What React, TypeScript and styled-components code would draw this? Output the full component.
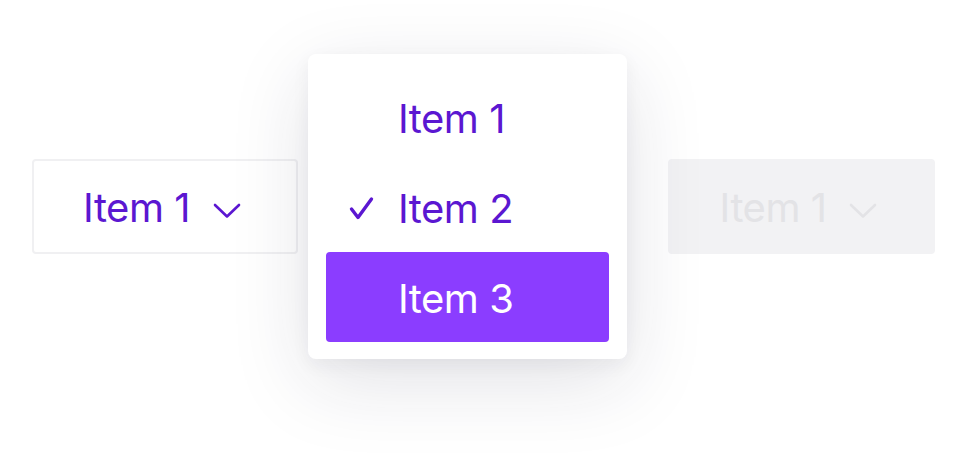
import React from "react";
import styled, {createGlobalStyle} from "styled-components";

const GlobalStyle = createGlobalStyle`
  html, body {
    margin: 0;
    padding: 0;
    background: #FFFFFF;
  }
  body {
    font-family: Inter, "Noto Sans", sans-serif;
  }
`

const items = ['Item 1', 'Item 2', 'Item 3'];

const Chevron: React.FC<{color: string}> = ({color}) => (
    <svg width="32" height="32" viewBox="0 0 32 32" fill="none">
        <path d="M4 13 L16 24.5 L28 13" stroke={color} strokeWidth="2.6" strokeLinecap="round" strokeLinejoin="round"/>
    </svg>
);

const Check: React.FC = () => (
    <svg width="32" height="32" viewBox="0 0 32 32" fill="none">
        <path d="M5.5 16 L12 24.5 L25.5 6" stroke="#5B17D1" strokeWidth="3.4" strokeLinecap="round" strokeLinejoin="round"/>
    </svg>
);

export default function App() {
    return (
        <>
            <GlobalStyle/>
            <PageStyle>
                <SelectButton>
                    <LabelStyle>Item 1</LabelStyle>
                    <Chevron color={"#5B17D1"}/>
                </SelectButton>

                <MenuStyle>
                    {items.map((item) => (
                        <MenuItemStyle key={item} active={item === 'Item 3'}>
                            <IconSlot>{item === 'Item 2' ? <Check/> : null}</IconSlot>
                            <LabelStyle>{item}</LabelStyle>
                        </MenuItemStyle>
                    ))}
                </MenuStyle>

                <SelectButton disabled>
                    <LabelStyle>Item 1</LabelStyle>
                    <Chevron color={"#E3E3E6"}/>
                </SelectButton>
            </PageStyle>
        </>
    );
}

const PageStyle = styled.div`
  display: flex;
  align-items: center;
  width: 972px;
  height: 456px;
  box-sizing: border-box;
  padding: 54px 0 97px 32px;
`

const SelectButton = styled.div<{disabled?: boolean}>`
  display: flex;
  align-items: center;
  justify-content: center;
  gap: 21px;
  box-sizing: border-box;
  width: ${p => p.disabled ? 267 : 266}px;
  height: 95px;
  margin-top: -1px;
  margin-left: ${p => p.disabled ? 41 : 0}px;
  padding: 3px 4px 0 0;
  border-radius: 4px;
  border: 2px solid ${p => p.disabled ? '#F2F2F4' : '#F0F0F2'};
  background: ${p => p.disabled ? '#F2F2F4' : '#FFFFFF'};
  color: ${p => p.disabled ? '#E3E3E6' : '#5B17D1'};
`

const LabelStyle = styled.span`
  font-size: 40px;
  font-weight: 400;
  line-height: 1;
  letter-spacing: -0.5px;
`

const MenuStyle = styled.div`
  position: relative;
  z-index: 1;
  display: flex;
  flex-direction: column;
  box-sizing: border-box;
  width: 319px;
  height: 305px;
  margin-left: 10px;
  padding: 18px 18px 17px;
  border-radius: 8px;
  background: #FFFFFF;
  box-shadow: 0 22px 80px rgba(30, 30, 60, 0.13), 0 6px 18px rgba(30, 30, 60, 0.05);
`

const MenuItemStyle = styled.div<{active?: boolean}>`
  display: flex;
  align-items: center;
  gap: 20px;
  height: 90px;
  padding: 3px 0 0 20px;
  box-sizing: border-box;
  border-radius: 4px;
  background: ${p => p.active ? '#8B3DFF' : 'transparent'};
  color: ${p => p.active ? '#FFFFFF' : '#5B17D1'};
`

const IconSlot = styled.div`
  display: flex;
  width: 32px;
  height: 32px;
`
